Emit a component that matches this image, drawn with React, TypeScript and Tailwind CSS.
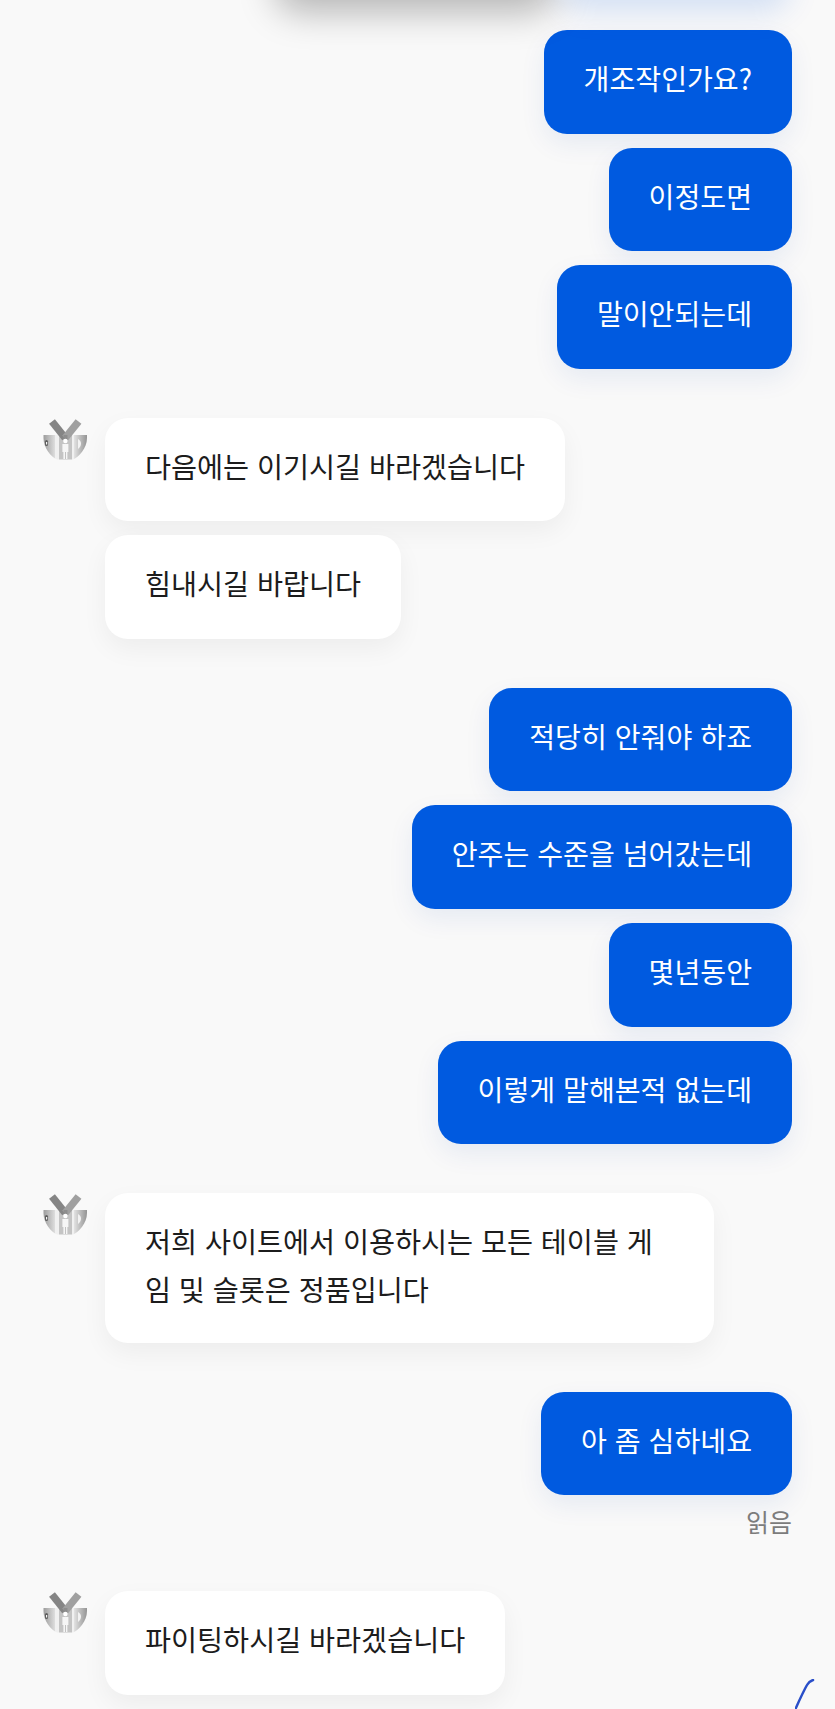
const Avatar = () => (
  <svg width="44" height="44" viewBox="0 0 44 44" className="shrink-0">
    <defs>
      <clipPath id="disc">
        <path d="M0.5 17 H44 V20 C44 30 36 39 30 41.5 H14 C8 39 0.5 30 0.5 20 Z" />
      </clipPath>
      <linearGradient id="left" x1="0" x2="1" y1="0" y2="0">
        <stop offset="0" stopColor="#9a9a9a" />
        <stop offset="1" stopColor="#dedede" />
      </linearGradient>
      <linearGradient id="right" x1="0" x2="1" y1="0" y2="0">
        <stop offset="0" stopColor="#e2e2e2" />
        <stop offset="1" stopColor="#8e8e8e" />
      </linearGradient>
    </defs>
    <g clipPath="url(#disc)">
      <rect x="0" y="17" width="12" height="26" fill="url(#left)" />
      <rect x="12" y="17" width="4" height="26" fill="#f0f0f0" />
      <rect x="16" y="17" width="13" height="26" fill="#c4c4c4" />
      <rect x="29" y="17" width="2" height="26" fill="#f0f0f0" />
      <rect x="31" y="17" width="14" height="26" fill="url(#right)" />
      <rect x="2" y="22" width="3" height="6" rx="1.5" fill="#5f5f5f" />
      <rect x="3" y="24" width="1.2" height="2.5" fill="#f5f5f5" />
      <path d="M35 21 C39 23 39 28 35 31 Z" fill="#f2f2f2" />
    </g>
    <path d="M9 3.5 L22.2 20" fill="none" stroke="#858585" strokeWidth="7.5" />
    <path d="M35.5 3.5 L22.2 20" fill="none" stroke="#a0a0a0" strokeWidth="7.5" />
    <rect x="20.5" y="17" width="4" height="5" fill="#8d8d8d" />
    <circle cx="22.4" cy="23" r="2.2" fill="#ffffff" />
    <path d="M19.4 26 H25.4 V34 H24.4 V41 H20.4 V34 H19.4 Z" fill="#f6f6f6" />
    <rect x="22" y="34" width="0.8" height="7" fill="#b5b5b5" />
  </svg>
);

const Sent = ({ text, note }: { text: string; note?: string }) => (
  <div className="flex flex-col items-end">
    <div className="h-[103.7px] rounded-[23px] bg-[#005ae0] px-10 pt-[24px] text-[28.1px] leading-[48px] text-white [word-spacing:1.7px] shadow-[0_10px_26px_rgba(0,60,160,0.08)]">
      {text}
    </div>
    {note && <span className="mt-[8px] h-[39px] text-[25px] leading-[36px] text-[#7c7c7c]">{note}</span>}
  </div>
);

const Received = ({ text, avatar }: { text: string; avatar?: boolean }) => (
  <div className="flex items-start gap-[18px]">
    <div className="w-[44px] shrink-0">{avatar && <Avatar />}</div>
    <div className="min-h-[103.7px] max-w-[609px] rounded-[23px] bg-white px-10 pt-[24px] pb-[30px] text-[28.3px] leading-[48px] text-[#1c1c1c] [word-spacing:1.5px] shadow-[0_10px_26px_rgba(0,0,0,0.05)]">
      {text}
    </div>
  </div>
);

const Group = ({ children }: { children: React.ReactNode }) => (
  <div className="flex flex-col gap-[14px]">{children}</div>
);

export default function App() {
  return (
    <div className="relative h-[1709px] w-[835px] overflow-hidden bg-[#f9f9f9] font-['Noto_Sans_CJK_KR','Noto_Sans',sans-serif]">
      {/* shadows of the bubbles scrolled out above */}
      <div className="absolute -top-[62px] left-[275px] h-[60px] w-[280px] rounded-[24px] bg-[#d0d0d0] shadow-[0_14px_36px_rgba(0,0,0,0.28)]"></div>
      <div className="absolute -top-[62px] left-[560px] h-[60px] w-[230px] rounded-[24px] bg-[#e6ebf6] shadow-[0_14px_30px_rgba(0,90,224,0.15)]"></div>

      <div className="flex flex-col gap-[48.6px] px-[43px] pt-[30px]">
        <Group>
          <Sent text="개조작인가요?" />
          <Sent text="이정도면" />
          <Sent text="말이안되는데" />
        </Group>
        <Group>
          <Received avatar text="다음에는 이기시길 바라겠습니다" />
          <Received text="힘내시길 바랍니다" />
        </Group>
        <Group>
          <Sent text="적당히 안줘야 하죠" />
          <Sent text="안주는 수준을 넘어갔는데" />
          <Sent text="몇년동안" />
          <Sent text="이렇게 말해본적 없는데" />
        </Group>
        <Group>
          <Received avatar text="저희 사이트에서 이용하시는 모든 테이블 게임 및 슬롯은 정품입니다" />
        </Group>
        <Group>
          <Sent text="아 좀 심하네요" note="읽음" />
        </Group>
        <Group>
          <Received avatar text="파이팅하시길 바라겠습니다" />
        </Group>
      </div>

      {/* pen stroke in the corner */}
      <svg className="absolute bottom-0 right-0" width="40" height="30" viewBox="0 0 40 30" fill="none">
        <path d="M0 31 C4 22 8 13 12 6 C13 4 15 2 18 1" stroke="#2a4fc9" strokeWidth="2.5" strokeLinecap="round" />
      </svg>
    </div>
  );
}
